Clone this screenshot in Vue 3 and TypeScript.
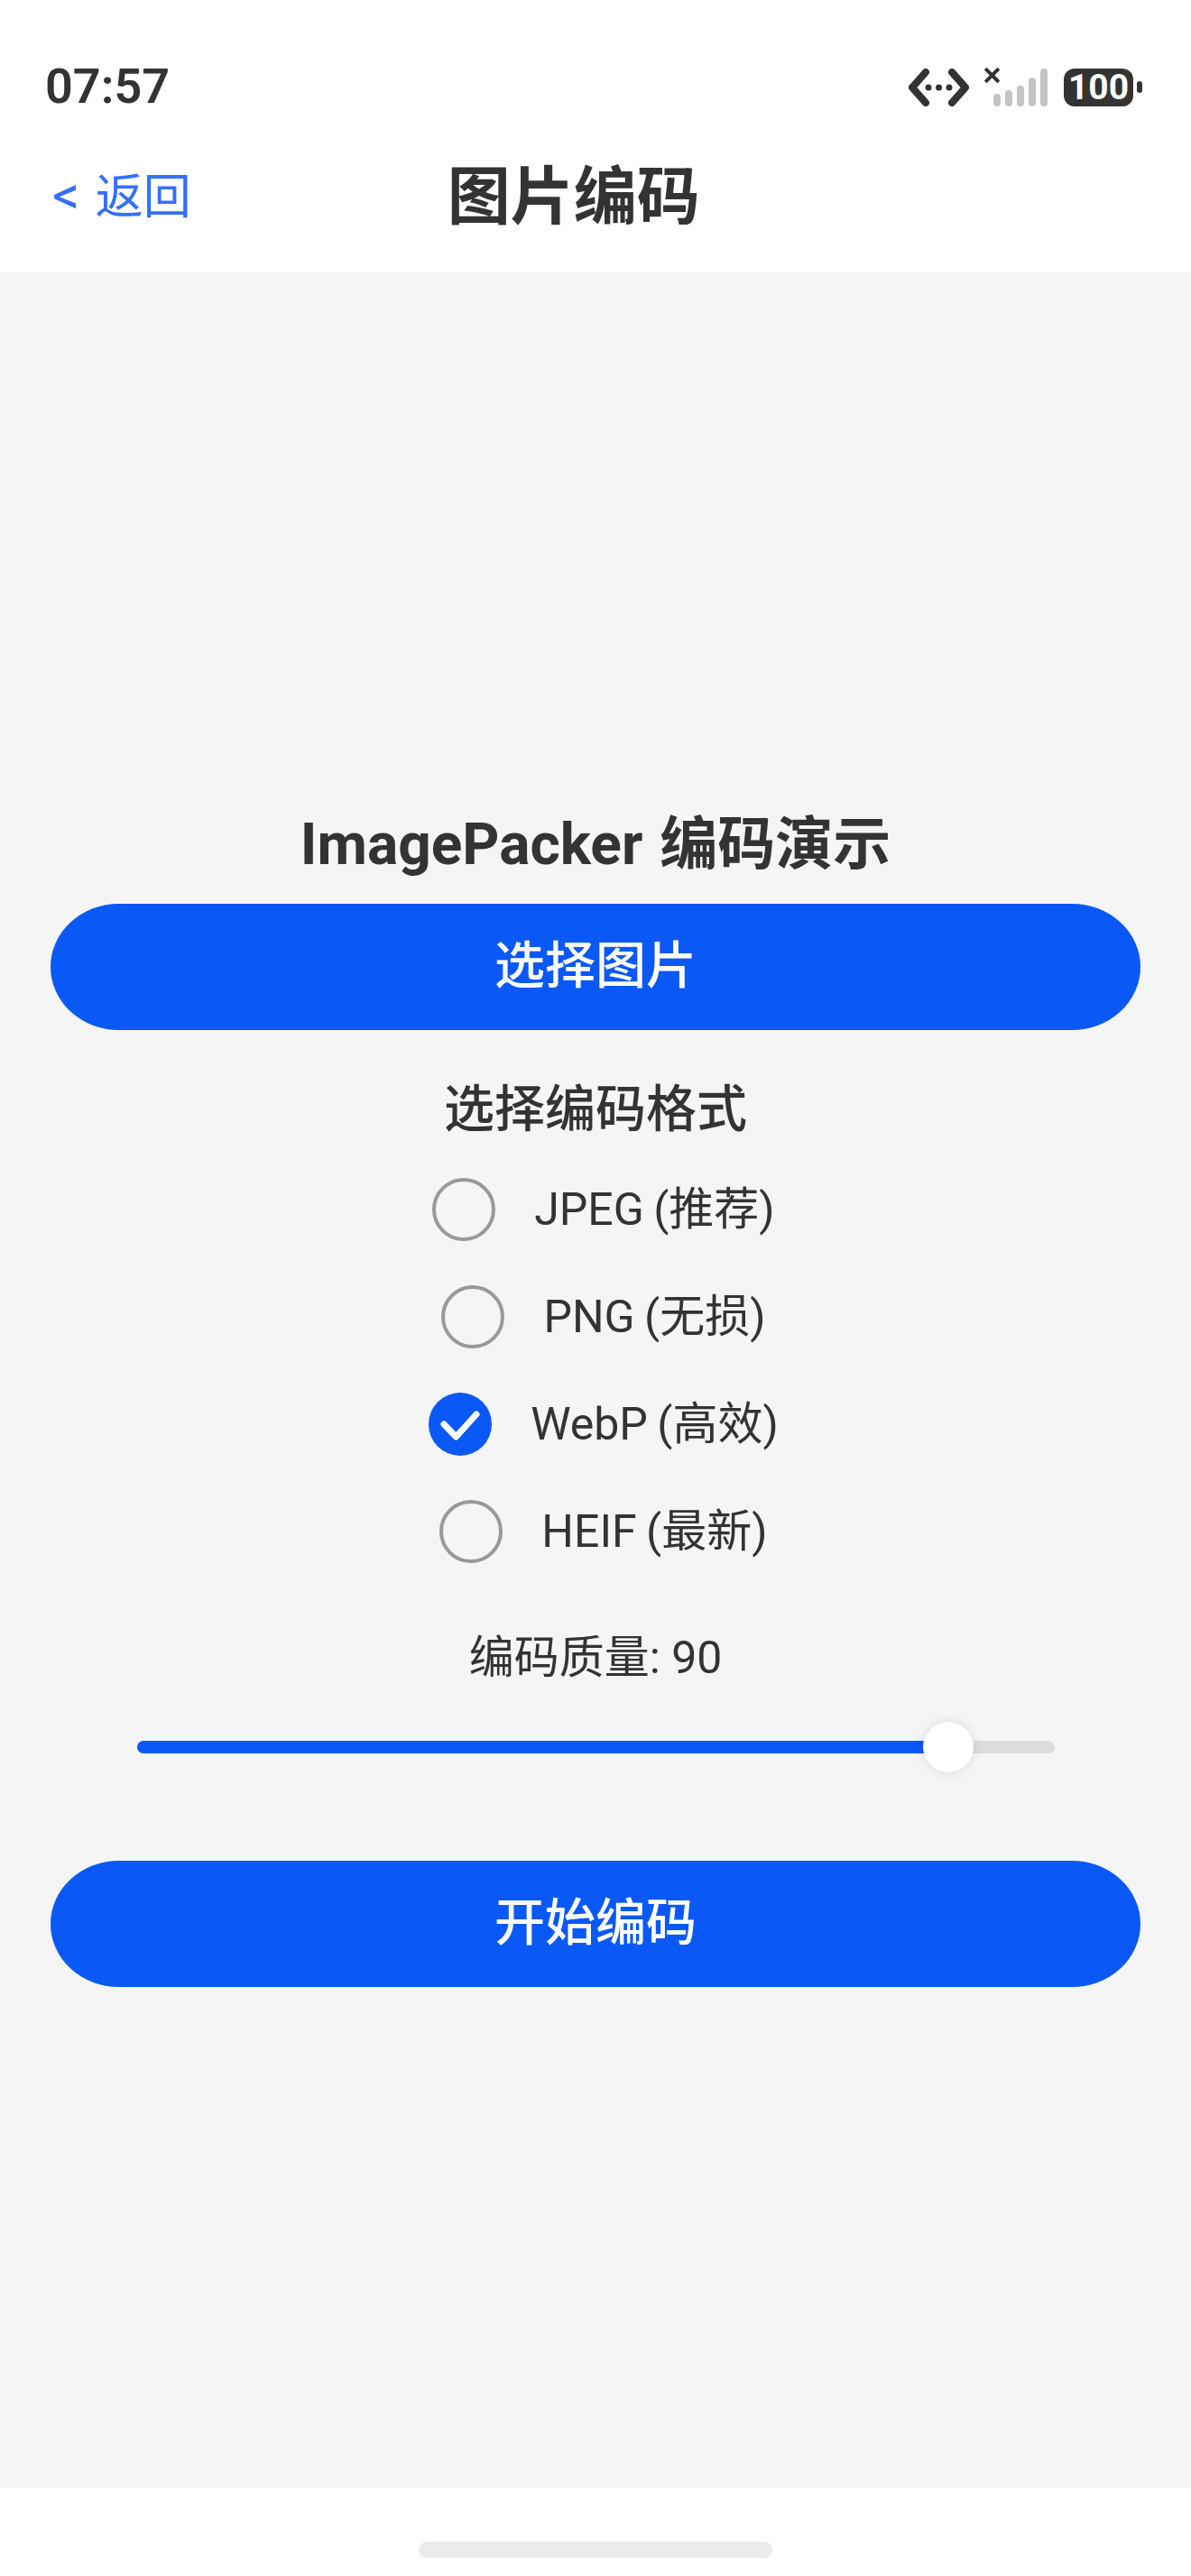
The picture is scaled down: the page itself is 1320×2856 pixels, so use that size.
<script setup lang="ts">
import { ref } from 'vue'

interface Format { label: string; value: string }

const formats: Format[] = [
  { label: 'JPEG (推荐)', value: 'jpeg' },
  { label: 'PNG (无损)', value: 'png' },
  { label: 'WebP (高效)', value: 'webp' },
  { label: 'HEIF (最新)', value: 'heif' },
]
const selected = ref('webp')
const quality = ref(90)
const bars = [14, 18, 23, 32, 42]
</script>

<template>
  <div class="page">
    <header class="top">
      <div class="status">
        <span class="time">07:57</span>
        <div class="status-icons">
          <svg class="net" width="67" height="42" viewBox="0 0 67 42">
            <path d="M19 4 4 21l15 17M48 4l15 17-15 17" fill="none" stroke="#333" stroke-width="8" stroke-linecap="round" stroke-linejoin="round" />
            <circle cx="22" cy="21" r="3.5" fill="#333" />
            <circle cx="33.500" cy="21" r="3.500" fill="#333" />
            <circle cx="45" cy="21" r="3.500" fill="#333" />
          </svg>
          <div class="signal">
            <svg class="cross" width="17" height="17" viewBox="0 0 17 17">
              <path d="M2.500 2.500l12 12M14.500 2.500l-12 12" stroke="#333" stroke-width="4" stroke-linecap="square" />
            </svg>
            <span v-for="h in bars" :key="h" class="bar" :style="{ height: h + 'px' }"></span>
          </div>
          <div class="battery"><span class="battery-num">100</span></div>
          <span class="battery-tip"></span>
        </div>
      </div>
      <nav class="nav">
        <span class="back"><span class="chev">&lt;</span> 返回</span>
        <h1 class="nav-title">图片编码</h1>
      </nav>
    </header>

    <main class="main">
      <h2 class="heading">ImagePacker 编码演示</h2>
      <button class="primary">选择图片</button>
      <h3 class="sub">选择编码格式</h3>
      <div class="radios">
        <label v-for="f in formats" :key="f.value" class="radio" @click="selected = f.value">
          <span class="circle" :class="{ on: selected === f.value }">
            <svg v-if="selected === f.value" width="70" height="70" viewBox="0 0 70 70">
              <path d="M17 35l13.500 14L53 24" fill="none" stroke="#fff" stroke-width="7" stroke-linecap="round" stroke-linejoin="round" />
            </svg>
          </span>
          <span class="radio-label">{{ f.label }}</span>
        </label>
      </div>
      <p class="quality">编码质量: {{ quality }}</p>
      <div class="slider">
        <div class="fill" :style="{ width: '88%' }"></div>
        <span class="thumb"></span>
      </div>
      <button class="primary start">开始编码</button>
    </main>

    <footer class="bottom"><span class="handle"></span></footer>
  </div>
</template>

<style>
html, body { margin: 0; background: #fff; }
</style>

<style scoped>
.page {
  width: 1320px;
  height: 2856px;
  display: flex;
  flex-direction: column;
  font-family: "Roboto", "Noto Sans CJK SC", sans-serif;
  color: #333;
  background: #fff;
  overflow: hidden;
}
.top { height: 302px; flex: none; }
.status {
  height: 160px;
  display: flex;
  justify-content: space-between;
  align-items: flex-start;
  padding: 66px 54px 0 50px;
  box-sizing: border-box;
}
.time {
  font-size: 54px;
  line-height: 60px;
  font-weight: 600;
}
.status-icons { display: flex; align-items: flex-start; padding-top: 10px; }
.net { display: block; }
.signal {
  position: relative;
  width: 60px;
  height: 42px;
  margin-left: 27px;
  display: flex;
  align-items: flex-end;
  justify-content: flex-end;
  gap: 5px;
}
.cross { position: absolute; left: -10px; top: -1px; }
.bar { width: 8px; background: #c4c4c4; border-radius: 4px; }
.battery {
  width: 77px;
  height: 42px;
  margin-left: 18px;
  border-radius: 12px;
  background: #333;
  display: flex;
  align-items: center;
  justify-content: center;
}
.battery-num {
  font-size: 39px;
  line-height: 42px;
  font-weight: 700;
  color: #fff;
}
.battery-tip {
  width: 6px;
  height: 13px;
  margin: 14px 0 0 4px;
  border-radius: 3px;
  background: #333;
}
.nav {
  display: flex;
  align-items: center;
  height: 110px;
  margin-top: 4px;
  padding-left: 58px;
}
.back { font-size: 53px; line-height: 70px; color: #3370ff; word-spacing: 4px; }
.chev { font-size: 60px; line-height: 60px; }
.nav-title { margin: 0 0 0 284px; font-size: 70px; line-height: 90px; font-weight: 700; }
.main {
  flex: 1;
  background: #f5f5f5;
  display: flex;
  flex-direction: column;
  align-items: center;
  padding: 590px 56px 0;
}
.heading { margin: 0; font-size: 64px; line-height: 90px; font-weight: 700; text-align: center; word-spacing: 3px; }
.primary {
  width: 100%;
  height: 140px;
  flex: none;
  border: 0;
  border-radius: 76px / 70px;
  background: #0a59f7;
  color: #fff;
  font-family: inherit;
  font-size: 56px;
  font-weight: 500;
  padding: 0 0 13px;
}
.heading + .primary { margin-top: 20px; }
.sub { margin: 48px 0 0; font-size: 56px; line-height: 80px; font-weight: 500; }
.radios { display: flex; flex-direction: column; align-items: center; gap: 49px; margin-top: 36px; padding-left: 18px; }
.radio { display: flex; align-items: center; gap: 43px; height: 70px; }
.circle {
  width: 70px;
  height: 70px;
  box-sizing: border-box;
  border: 4px solid #999;
  border-radius: 50%;
  flex: none;
  position: relative;
}
.circle.on { border: 0; background: #0a59f7; }
.circle svg { display: block; }
.radio-label { font-size: 50px; line-height: 70px; word-spacing: -2px; }
.quality { margin: 70px 0 0; font-size: 50px; line-height: 70px; }
.slider {
  position: relative;
  width: 1017px;
  height: 14px;
  margin-top: 57px;
  border-radius: 7px;
  background: #dcdcdc;
}
.fill { height: 100%; border-radius: 7px; background: #0a59f7; }
.thumb {
  position: absolute;
  left: 871px;
  top: -21px;
  width: 56px;
  height: 56px;
  border-radius: 50%;
  background: #fff;
  box-shadow: 0 0 12px rgba(0, 0, 0, 0.12);
}
.start { margin-top: 119px; }
.bottom {
  height: 98px;
  flex: none;
  display: flex;
  justify-content: center;
  padding-top: 60px;
  box-sizing: border-box;
}
.handle { width: 392px; height: 18px; border-radius: 9px; background: #ebebeb; }
</style>
